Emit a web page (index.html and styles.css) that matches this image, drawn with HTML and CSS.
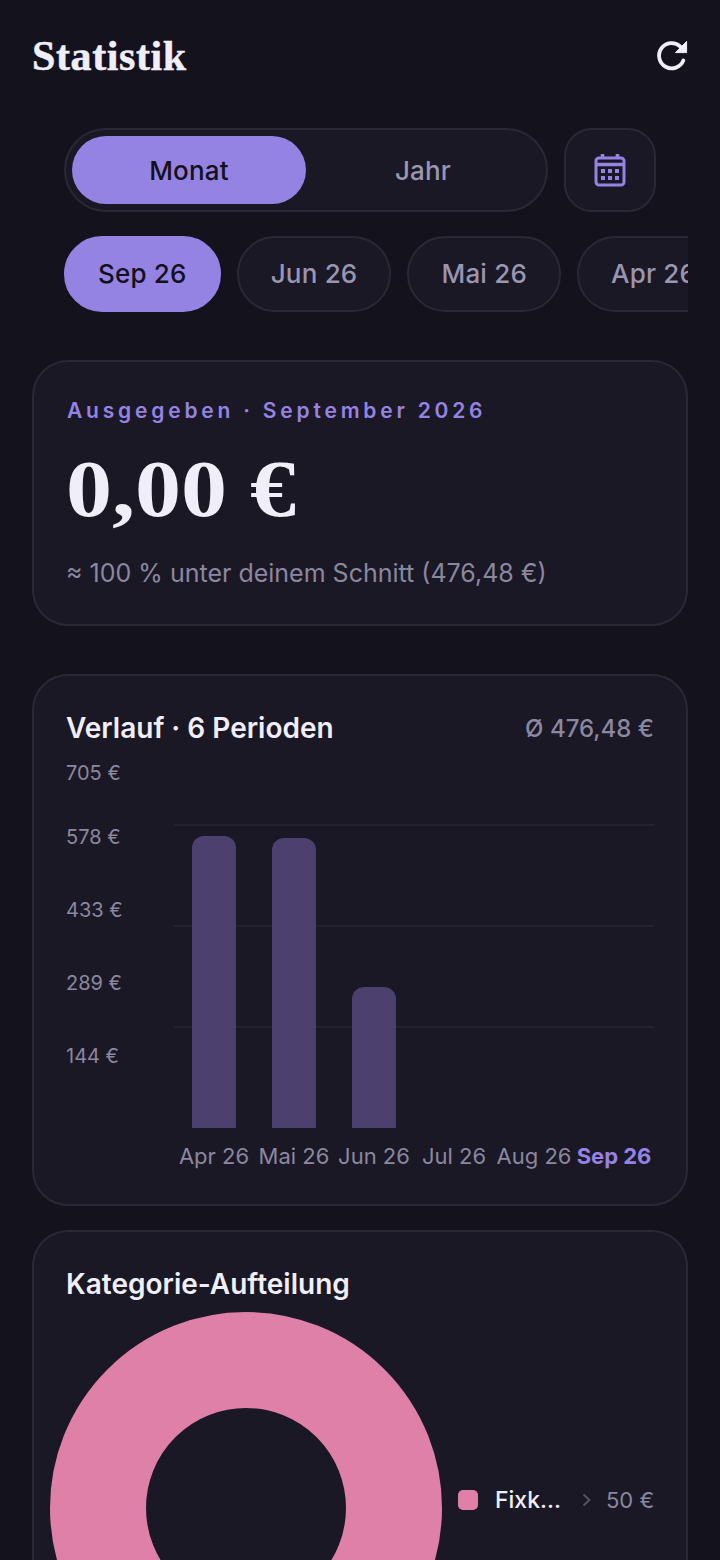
FILE: index.html
```html
<!DOCTYPE html>
<html lang="de">
<head>
    <meta charset="UTF-8">
    <meta name="viewport" content="width=device-width, initial-scale=1.0">
    <title>Statistik</title>
    <link rel="stylesheet" href="styles.css">
</head>
<body>

    <header class="topbar">
        <h1 class="page-title">Statistik</h1>
        <button class="refresh-btn" aria-label="Aktualisieren">
            <svg width="32" height="32" viewBox="0 0 32 32" fill="none">
                <path d="M27.4 20.4A12.6 12.6 0 1 1 24.4 6.6" stroke="#f0eef8" stroke-width="3.8" stroke-linecap="round"/>
                <path d="M19.4 12.6H30.6V1.4Z" fill="#f0eef8" stroke="#f0eef8" stroke-width="1" stroke-linejoin="round"/>
            </svg>
        </button>
    </header>

    <div class="mode-row">
        <div class="toggle">
            <div class="toggle-item active">Monat</div>
            <div class="toggle-item">Jahr</div>
        </div>
        <button class="calendar-btn" aria-label="Kalender">
            <svg width="32" height="34" viewBox="0 0 32 34" fill="none">
                <rect x="2" y="5" width="28" height="27" rx="3" stroke="#9583e4" stroke-width="3"/>
                <path d="M2 11.5H30" stroke="#9583e4" stroke-width="3.5"/>
                <path d="M8.5 1V6M23.5 1V6" stroke="#9583e4" stroke-width="3.6"/>
                <g fill="#9583e4">
                    <rect x="7" y="16" width="4" height="4"/>
                    <rect x="14" y="16" width="4" height="4"/>
                    <rect x="21" y="16" width="4" height="4"/>
                    <rect x="7" y="23" width="4" height="4"/>
                    <rect x="14" y="23" width="4" height="4"/>
                    <rect x="21" y="23" width="4" height="4"/>
                </g>
            </svg>
        </button>
    </div>

    <div class="chips">
        <div class="chip active">Sep 26</div>
        <div class="chip">Jun 26</div>
        <div class="chip">Mai 26</div>
        <div class="chip">Apr 26</div>
    </div>

    <section class="card summary">
        <div class="summary-label">Ausgegeben · September 2026</div>
        <div class="summary-amount">0,00 €</div>
        <div class="summary-note">≈ 100 % unter deinem Schnitt (476,48 €)</div>
    </section>

    <section class="card trend">
        <div class="card-head">
            <h2 class="card-title">Verlauf · 6 Perioden</h2>
            <span class="card-avg">Ø 476,48 €</span>
        </div>
        <div class="chart">
            <div class="y-axis">
                <span>705 €</span>
                <span>578 €</span>
                <span>433 €</span>
                <span>289 €</span>
                <span>144 €</span>
            </div>
            <div class="chart-main">
                <div class="plot">
                    <div class="grid-lines">
                        <div></div>
                        <div></div>
                        <div></div>
                    </div>
                    <div class="bar-slot"><div class="bar" style="height: 292px"></div></div>
                    <div class="bar-slot"><div class="bar" style="height: 290px"></div></div>
                    <div class="bar-slot"><div class="bar" style="height: 141px"></div></div>
                    <div class="bar-slot"></div>
                    <div class="bar-slot"></div>
                    <div class="bar-slot"></div>
                </div>
                <div class="x-axis">
                    <span>Apr 26</span>
                    <span>Mai 26</span>
                    <span>Jun 26</span>
                    <span>Jul 26</span>
                    <span>Aug 26</span>
                    <span class="current">Sep 26</span>
                </div>
            </div>
        </div>
    </section>

    <section class="card split">
        <h2 class="card-title">Kategorie-Aufteilung</h2>
        <div class="split-body">
            <div class="donut"></div>
            <div class="legend-row">
                <span class="legend-dot"></span>
                <span class="legend-name">Fixk...</span>
                <svg class="legend-chevron" width="10" height="14" viewBox="0 0 10 14" fill="none">
                    <path d="M1.5 1.5L7.5 7L1.5 12.5" stroke="#55535f" stroke-width="2"/>
                </svg>
                <span class="legend-value">50 €</span>
            </div>
        </div>
    </section>

</body>
</html>
```

FILE: styles.css
```css
* {
    box-sizing: border-box;
}
html, body {
    height: 1560px;
    overflow: hidden;
}
body {
    margin: 0;
    background-color: #14121d;
    color: #f0eef8;
    font-family: Inter, "Noto Sans", sans-serif;
}
button {
    font-family: inherit;
    padding: 0;
    cursor: pointer;
}

.topbar {
    height: 112px;
    padding: 0 32px;
    display: flex;
    justify-content: space-between;
    align-items: center;
}
.page-title {
    margin: 0;
    font-family: "Liberation Serif", serif;
    font-size: 42px;
    font-weight: 700;
    letter-spacing: 0.6px;
    -webkit-text-stroke: 0.5px #f0eef8;
}
.refresh-btn {
    width: 32px;
    height: 32px;
    border: none;
    background: none;
}

.mode-row {
    margin-top: 16px;
    padding: 0 64px;
    display: flex;
    gap: 16px;
}
.toggle {
    width: 484px;
    height: 84px;
    padding: 6px;
    display: flex;
    border: 2px solid #2a2835;
    border-radius: 42px;
    background-color: #1a1825;
}
.toggle-item {
    width: 234px;
    display: flex;
    justify-content: center;
    align-items: center;
    border-radius: 34px;
    font-size: 26px;
    font-weight: 500;
    letter-spacing: 0.2px;
    color: #9a95b0;
}
.toggle-item.active {
    background-color: #9583e4;
    color: #13121c;
}
.calendar-btn {
    width: 92px;
    height: 84px;
    display: flex;
    justify-content: center;
    align-items: center;
    border: 2px solid #2a2835;
    border-radius: 28px;
    background-color: #1a1825;
}

.chips {
    margin: 24px 32px 0 64px;
    display: flex;
    gap: 16px;
    overflow: hidden;
}
.chip {
    flex: none;
    height: 76px;
    padding: 0 32px 2px;
    display: flex;
    align-items: center;
    border: 2px solid #2a2835;
    border-radius: 38px;
    background-color: #1a1825;
    font-size: 26px;
    font-weight: 500;
    letter-spacing: 0.2px;
    color: #9a95b0;
}
.chip.active {
    border-color: #9583e4;
    background-color: #9583e4;
    color: #13121c;
}

.card {
    margin: 48px 32px 0;
    padding: 0 32px;
    border: 2px solid #2a2835;
    border-radius: 36px;
    background-color: #1a1825;
}

.summary {
    height: 266px;
    padding-top: 34px;
}
.summary-label {
    margin-left: 1px;
    font-size: 21px;
    line-height: 30px;
    font-weight: 600;
    letter-spacing: 3.8px;
    color: #9583e4;
}
.summary-amount {
    margin-top: 17px;
    font-family: "Liberation Serif", serif;
    font-size: 80px;
    line-height: 92px;
    font-weight: 700;
    transform: scaleX(1.15);
    transform-origin: left;
}
.summary-note {
    margin-top: 21px;
    font-size: 25px;
    line-height: 34px;
    color: #8b87a0;
}

.trend {
    height: 532px;
    padding-top: 32px;
}
.card-head {
    display: flex;
    justify-content: space-between;
    align-items: center;
    height: 40px;
}
.card-title {
    margin: 0;
    font-size: 28px;
    line-height: 40px;
    font-weight: 600;
}
.card-avg {
    font-size: 24px;
    font-weight: 500;
    color: #8b87a0;
}

.chart {
    display: flex;
}
.y-axis {
    width: 108px;
    padding-top: 11px;
    display: flex;
    flex-direction: column;
    font-size: 20px;
    line-height: 28px;
    color: #8b87a0;
}
.y-axis span {
    margin-top: 45px;
}
.y-axis span:first-child {
    margin-top: 0;
}
.y-axis span:nth-child(2) {
    margin-top: 36px;
}
.chart-main {
    flex: 1;
    padding-top: 77px;
}
.plot {
    position: relative;
    height: 303px;
    display: flex;
    align-items: flex-end;
}
.grid-lines {
    position: absolute;
    inset: -1px 0 1px;
    display: flex;
    flex-direction: column;
}
.grid-lines div {
    flex: 1;
    border-top: 2px solid #23222e;
}
.bar-slot {
    position: relative;
    flex: 1;
    display: flex;
    justify-content: center;
}
.bar {
    width: 44px;
    border-radius: 12px 12px 0 0;
    background-color: #4b406e;
}
.x-axis {
    margin-top: 14px;
    display: flex;
}
.x-axis span {
    flex: 1;
    text-align: center;
    font-size: 22px;
    line-height: 28px;
    white-space: nowrap;
    color: #8b87a0;
}
.x-axis .current {
    font-weight: 700;
    color: #9583e4;
}

.split {
    margin-top: 24px;
    height: 400px;
    padding-top: 32px;
    padding-left: 16px;
}
.split .card-title {
    padding-left: 16px;
}
.split-body {
    margin-top: 8px;
    display: flex;
    align-items: center;
    height: 392px;
}
.donut {
    flex: none;
    width: 392px;
    height: 392px;
    border: 96px solid #df80a8;
    border-radius: 50%;
}
.legend-row {
    margin-left: 16px;
    margin-bottom: 16px;
    display: flex;
    align-items: center;
}
.legend-dot {
    flex: none;
    width: 20px;
    height: 20px;
    border-radius: 5px;
    background-color: #df80a8;
}
.legend-name {
    margin-left: 17px;
    font-size: 23px;
    font-weight: 500;
    white-space: nowrap;
}
.legend-chevron {
    flex: none;
    margin-left: 21px;
}
.legend-value {
    margin-left: 14px;
    font-size: 22px;
    white-space: nowrap;
    color: #8b87a0;
}
```
